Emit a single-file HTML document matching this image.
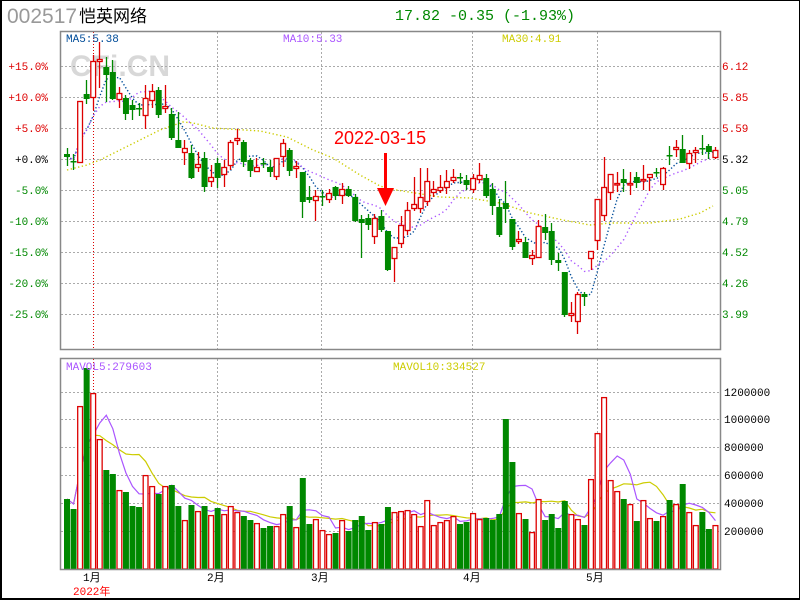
<!DOCTYPE html>
<html><head><meta charset="utf-8"><style>
html,body{margin:0;padding:0;background:#fff;}
body{width:800px;height:600px;overflow:hidden;position:relative;}
svg{position:absolute;left:0;top:0;}
text{font-family:"Liberation Mono",monospace;}
</style></head><body>
<svg id="s" width="800" height="600" xmlns="http://www.w3.org/2000/svg">
<rect x="0.5" y="0.5" width="799" height="599" fill="#fff" stroke="#000" stroke-width="1"/>
<line x1="1" y1="0" x2="1" y2="600" stroke="#000" stroke-width="2"/>
<line x1="0" y1="599" x2="800" y2="599" stroke="#000" stroke-width="2"/>
<text x="7" y="23" font-size="21" fill="#999" style="font-family:'Liberation Sans',sans-serif">002517</text>
<text x="79" y="22" font-size="17" fill="#000" style="font-family:'Liberation Sans','Noto Sans CJK SC',sans-serif">恺英网络</text>
<text x="395" y="20" font-size="15" fill="#008800">17.82 -0.35 (-1.93%)</text>
<text x="70" y="76" font-size="30" font-weight="bold" fill="#d8d8d8" style="font-family:'Liberation Sans',sans-serif">CFi.CN</text>
<g id="grid"></g>
<g id="lines"></g>
<g id="cand"></g>
<g id="vol"></g>
<rect x="60.5" y="31.5" width="660" height="318" fill="none" stroke="#888" stroke-width="1.5"/>
<rect x="60.5" y="358.5" width="660" height="211" fill="none" stroke="#888" stroke-width="1.5"/>
<text x="66" y="42" font-size="11" fill="#004c99">MA5:5.38</text>
<text x="283" y="42" font-size="11" fill="#aa55ff">MA10:5.33</text>
<text x="502" y="42" font-size="11" fill="#cccc00">MA30:4.91</text>
<text x="66" y="370" font-size="11" fill="#aa55ff">MAVOL5:279603</text>
<text x="393" y="370" font-size="11" fill="#cccc00">MAVOL10:334527</text>
<text x="334" y="144" font-size="18" fill="#ff0000" style="font-family:'Liberation Sans',sans-serif">2022-03-15</text>
<rect x="384" y="153" width="3" height="40" fill="#ff0000"/>
<polygon points="377,188 394,188 385.5,206" fill="#ff0000"/>
<g font-size="11" fill="#000" style="font-family:'Liberation Sans','Noto Sans CJK SC',sans-serif">
<text x="83" y="581">1月</text><text x="207" y="581">2月</text><text x="311" y="581">3月</text><text x="463" y="581">4月</text><text x="586" y="581">5月</text>
<text x="73" y="595" fill="#ff0000">2022年</text>
</g>
</svg>
<script>
var S=document.getElementById('s'),NS='http://www.w3.org/2000/svg';
function el(p,t,a){var e=document.createElementNS(NS,t);for(var k in a)e.setAttribute(k,a[k]);p.appendChild(e);return e;}
function tx(p,x,y,s,c,anchor){var e=el(p,'text',{x:x,y:y,'font-size':11,fill:c});if(anchor)e.setAttribute('text-anchor',anchor);e.textContent=s;}
var G=document.getElementById('grid');
var ys=[66,97,128,159,190,221,252,283,314];
var lp=['+15.0%','+10.0%','+5.0%','+0.0%','-5.0%','-10.0%','-15.0%','-20.0%','-25.0%'];
var rp=['6.12','5.85','5.59','5.32','5.05','4.79','4.52','4.26','3.99'];
ys.forEach(function(y,i){
 el(G,'line',{x1:61,y1:y+.5,x2:720,y2:y+.5,stroke:'#aaa','stroke-dasharray':'2,2'});
 var c=i<3?'#dd0000':(i==3?'#000':'#008800');
 tx(G,48,y+4,lp[i],c,'end');tx(G,722,y+4,rp[i],c);
});
[217,321,472,597].forEach(function(x){
 el(G,'line',{x1:x+.5,y1:32,x2:x+.5,y2:349,stroke:'#aaa','stroke-dasharray':'2,2'});
 el(G,'line',{x1:x+.5,y1:359,x2:x+.5,y2:569,stroke:'#aaa','stroke-dasharray':'2,2'});
});
el(G,'line',{x1:93.5,y1:32,x2:93.5,y2:349,stroke:'#dd0000','stroke-dasharray':'1,2'});
el(G,'line',{x1:93.5,y1:359,x2:93.5,y2:392,stroke:'#dd0000','stroke-dasharray':'1,2'});
var vy=[392,419,447,475,503,531],vl=['1200000','1000000','800000','600000','400000','200000'];
vy.forEach(function(y,i){el(G,'line',{x1:61,y1:y+.5,x2:720,y2:y+.5,stroke:'#aaa','stroke-dasharray':'2,2'});tx(G,724,y+4,vl[i],'#000');});

var C=[
['g',154,157,148,166],['g',161,162,154,170],['r',101,162,101,163],['g',94,99,80,104],['r',61,97,55,110],
['r',59,61,42,88],['g',67,75,57,102],['g',72,99,60,100],['r',93,99,87,108],['g',98,114,95,120],
['g',105,110,100,120],['g',108,109,103,116],['r',98,115,85,129],['r',91,100,84,108],['g',90,115,87,118],
['r',106,108,85,113],['g',114,138,108,140],['g',140,148,112,148],['r',148,152,140,165],['g',153,178,145,179],
['r',164,167,152,172],['g',158,187,152,192],['r',177,181,165,187],['g',163,178,158,188],['r',167,174,160,187],
['r',142,165,140,170],['r',138,140,129,145],['g',142,162,140,167],['g',160,171,158,177],['r',167,171,158,171],
['g',163,164,158,168],['g',167,172,160,177],['r',158,176,158,180],['r',143,156,139,167],['g',150,171,148,176],
['r',166,168,161,178],['g',172,202,172,218],['g',197,200,186,203],['r',196,200,190,221],['g',196,197,190,206],
['r',193,199,189,203],['g',187,196,186,200],['r',189,195,183,204],['g',189,196,186,197],['g',197,221,194,222],
['g',219,223,215,258],['g',218,225,214,230],['r',218,236,214,244],['g',216,230,210,232],['g',231,270,231,271],
['r',247,258,247,282],['r',225,243,216,248],['r',210,230,202,235],['r',204,208,177,211],['r',197,208,168,213],
['r',181,201,168,206],['r',189,192,181,197],['r',187,190,175,193],['r',181,187,170,194],['r',177,180,169,183],
['g',177,178,173,184],['g',180,185,175,190],['r',178,189,174,193],['r',175,179,163,183],['g',178,196,174,198],
['g',189,206,183,215],['g',207,235,199,237],['g',203,209,181,223],['g',219,247,219,250],['r',239,241,231,244],
['g',242,258,237,258],['r',255,258,250,265],['r',226,257,220,258],['g',227,233,214,240],['g',231,260,223,265],
['g',260,263,253,271],['g',272,315,272,317],['r',313,315,302,322],['r',294,321,292,334],['g',294,297,292,306],
['r',251,258,251,270],['r',199,240,199,250],['r',187,215,157,221],['r',174,192,174,200],['r',183,184,172,192],
['g',179,183,169,192],['r',183,184,172,195],['g',177,183,172,188],['r',179,180,165,190],['r',174,177,174,191],
['g',172,173,168,177],['r',168,184,167,190],['g',155,156,146,165],['r',147,149,140,157],['g',149,163,135,163],
['r',153,163,150,169],['r',150,152,147,163],['g',148,149,135,155],['g',146,152,144,159],['r',150,157,147,159]];
var V=('g499,g509,r406,g368,r393,r439,g470,g474,r490,g492,g506,g507,r475,r486,g494,r486,g485,g506,r520,g505,r511,g506,r515,g508,r514,r506,r512,g516,g520,r523,g528,g526,r526,r514,g506,r527,g478,g524,r519,r530,r534,g533,r520,g531,g520,g516,g530,r522,g524,g507,r512,'+
'r511,r510,r514,r526,r500,r525,r522,r520,r516,g524,g522,r513,r519,g518,g520,g514,g419,g462,r513,g519,r532,r499,g520,g514,g528,g501,r514,'+
'r519,g525,r479,r433,r397,r480,r491,g499,r504,g521,r500,r518,g521,r516,g500,r504,g484,r512,r525,g512,g529,r525').split(',');
var CD=document.getElementById('cand'),VG=document.getElementById('vol'),L=document.getElementById('lines');
var RED='#dd0000',GRN='#008800';
function X(i){return 64+i*6.55;}
C.forEach(function(c,i){
 var x=X(i),cx=Math.round(x+2.5)+.5,col=c[0]=='r'?RED:GRN;
 el(CD,'line',{x1:cx,y1:c[3],x2:cx,y2:c[4],stroke:col,'stroke-width':1.3});
 var h=Math.max(c[2]-c[1],1.5);
 if(c[0]=='r') el(CD,'rect',{x:x+0.6,y:c[1]+.5,width:4.8,height:h,fill:'#fff',stroke:col,'stroke-width':1.3});
 else el(CD,'rect',{x:x,y:c[1],width:6,height:h,fill:col});
});
V.forEach(function(v,i){
 var x=X(i),t=+v.slice(1);
 if(v[0]=='r') el(VG,'rect',{x:x+0.6,y:t+.6,width:4.8,height:569-t-0.6,fill:'#fff',stroke:RED,'stroke-width':1.3});
 else el(VG,'rect',{x:x,y:t,width:6,height:569-t,fill:GRN});
});
function ma(arr,n){var o=[];for(var i=0;i<arr.length;i++){var s=0,k=0;for(var j=Math.max(0,i-n+1);j<=i;j++){s+=arr[j];k++;}o.push(s/k);}return o;}
var close=C.map(function(c){return c[0]=='r'?c[1]:c[2];});
function pl(vals,col,dash,w,start){var p=[];vals.forEach(function(v,i){if(i>=start)p.push((X(i)+3)+','+v.toFixed(1));});
 var a={points:p.join(' '),fill:'none',stroke:col,'stroke-width':w||1.2};if(dash)a['stroke-dasharray']=dash;el(L,'polyline',a);}
pl(ma(close,5),'#004c99','1.3,2.2',1.4,0);
pl(ma(close,10),'#aa55ff','1.3,3',1.4,0);
el(L,'polyline',{points:'67,170 87,165 100,160 120,150 160,130 183,122 193,123 213,128 260,131 287,137 313,150 333,158 360,175 380,186 390,189 440,197 470,198 500,203 530,213 563,220 590,225 610,223 650,223 680,219 700,213 713,206',fill:'none',stroke:'#cccc00','stroke-width':1.4,'stroke-dasharray':'1.3,2.5'});
var vt=V.map(function(v){return 569-(+v.slice(1));});
var m5=ma(vt,5).map(function(h){return 569-h;}),m10=ma(vt,10).map(function(h){return 569-h;});
pl(m10,'#cccc00',null,1.2,0);
pl(m5,'#aa55ff',null,1.2,0);
</script>
</body></html>
